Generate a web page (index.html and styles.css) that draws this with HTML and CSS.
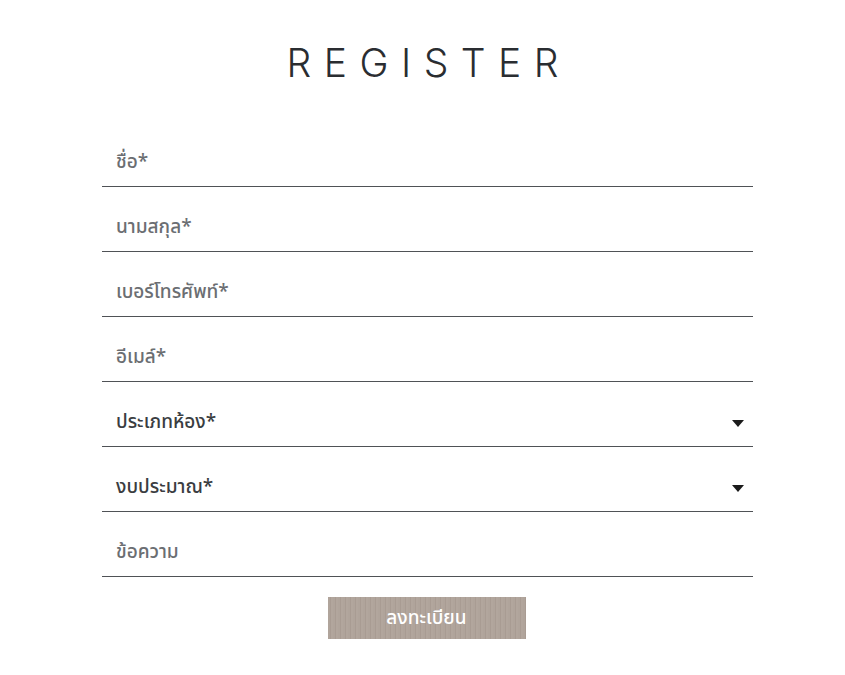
FILE: index.html
```html
<!DOCTYPE html>
<html lang="th">
<head>
<meta charset="utf-8">
<title>Register</title>
<link rel="stylesheet" href="styles.css">
</head>
<body>
<main class="page">
  <h1 class="title">REGISTER</h1>
  <form class="form">
    <div class="field"><span class="label">ชื่อ*</span></div>
    <div class="field"><span class="label">นามสกุล*</span></div>
    <div class="field"><span class="label">เบอร์โทรศัพท์*</span></div>
    <div class="field"><span class="label">อีเมล์*</span></div>
    <div class="field select"><span class="label dark">ประเภทห้อง*</span><span class="caret"></span></div>
    <div class="field select"><span class="label dark">งบประมาณ*</span><span class="caret"></span></div>
    <div class="field"><span class="label">ข้อความ</span></div>
    <div class="actions"><button type="button" class="submit">ลงทะเบียน</button></div>
  </form>
</main>
</body>
</html>
```

FILE: styles.css
```css
html, body {
  margin: 0;
  padding: 0;
  background: #fff;
}
body {
  font-family: "Noto Sans Thai", "Noto Sans", sans-serif;
}
.page {
  padding-top: 40px;
}
.title {
  margin: 0;
  text-align: center;
  font-family: "Inter", "Open Sans", sans-serif;
  font-weight: 300;
  font-size: 39px;
  line-height: 46px;
  letter-spacing: 0.32em;
  padding-left: 0.32em;
  color: #2a2d31;
}
.form {
  margin: 36px 0 0 102px;
  width: 651px;
}
.field {
  border-bottom: 1px solid #4f5256;
  display: flex;
  align-items: flex-end;
  justify-content: space-between;
  padding: 0 9px 10px 14px;
  box-sizing: content-box;
  height: 54px;
}
.label {
  font-size: 19px;
  line-height: 26px;
  font-weight: 500;
  color: #6b6e72;
}
.label.dark {
  color: #3a3d41;
}
.caret {
  width: 0;
  height: 0;
  border-left: 6px solid transparent;
  border-right: 6px solid transparent;
  border-top: 7px solid #1b1b1b;
  margin-bottom: 9px;
}
.actions {
  display: flex;
  justify-content: center;
  padding: 20px 2px 0 0;
}
.submit {
  width: 198px;
  height: 42px;
  border: 0;
  background: repeating-linear-gradient(90deg, #b0a49b 0 2px, #a99c93 2px 3px, #b2a69d 3px 5px);
  color: #fff;
  font-family: "Noto Sans Thai", "Noto Sans", sans-serif;
  font-size: 19px;
  font-weight: 500;
  padding: 0;
}
```
